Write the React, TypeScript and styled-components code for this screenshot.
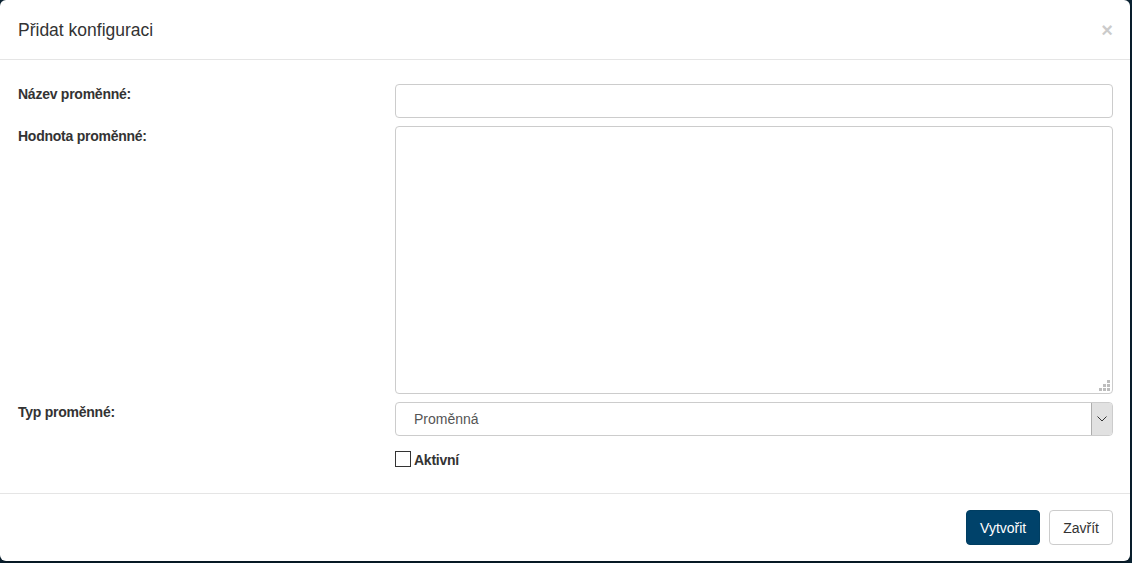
import styled, { createGlobalStyle } from 'styled-components';

const GlobalStyle = createGlobalStyle`
  html, body {
    margin: 0;
    padding: 0;
    height: 100%;
    background: #0b2536;
    font-family: "Liberation Sans", Arial, sans-serif;
    color: #333;
  }
  * { box-sizing: border-box; }
`;

const Modal = styled.div`
  width: 1130px;
  height: 561px;
  background: #fff;
  border-radius: 6px;
  box-shadow: 0 2px 6px rgba(0, 0, 0, 0.5);
  display: flex;
  flex-direction: column;
`;

const Header = styled.div`
  height: 60px;
  padding: 0 18px;
  display: flex;
  align-items: center;
  justify-content: space-between;
  border-bottom: 1px solid #e5e5e5;
`;

const Title = styled.h4`
  margin: 0;
  padding-top: 2px;
  font-size: 17.5px;
  font-weight: normal;
  color: #333;
`;

const Close = styled.button`
  border: 0;
  background: none;
  padding: 0;
  margin-right: -1px;
  font-family: "Liberation Sans", Arial, sans-serif;
  font-size: 20px;
  font-weight: bold;
  color: #000;
  opacity: 0.2;
  line-height: 1;
  cursor: pointer;
`;

const Body = styled.div`
  flex: 1;
  padding: 24px 17px 0 18px;
  display: flex;
  flex-direction: column;
  gap: 8px;
`;

const Row = styled.div`
  display: grid;
  grid-template-columns: 377px 1fr;
  align-items: start;
`;

const Label = styled.label`
  font-size: 14px;
  font-weight: bold;
  padding-top: 2px;
  letter-spacing: -0.25px;
`;

const Input = styled.input`
  height: 34px;
  border: 1px solid #ccc;
  border-radius: 4px;
  padding: 6px 12px;
  font-size: 14px;
  font-family: inherit;
  outline: none;
`;

const AreaWrap = styled.div`
  position: relative;
  height: 268px;
`;

const TextArea = styled.textarea`
  display: block;
  width: 100%;
  height: 100%;
  border: 1px solid #ccc;
  border-radius: 4px;
  padding: 6px 12px;
  font-size: 14px;
  font-family: inherit;
  resize: none;
  outline: none;
`;

const Grip = styled.svg`
  position: absolute;
  right: 3px;
  bottom: 3px;
  pointer-events: none;
`;

const SelectWrap = styled.div`
  position: relative;
  height: 34px;
`;

const Select = styled.select`
  width: 100%;
  height: 34px;
  appearance: none;
  border: 1px solid #ccc;
  border-radius: 4px;
  padding: 0 30px 0 18px;
  font-size: 14px;
  font-family: inherit;
  color: #555;
  background: #fff;
  outline: none;
`;

const SelectArrow = styled.span`
  position: absolute;
  top: 1px;
  right: 1px;
  bottom: 1px;
  width: 21px;
  background: #e1e1e1;
  border-left: 1px solid #adadad;
  border-radius: 0 3px 3px 0;
  display: flex;
  align-items: center;
  justify-content: center;
  pointer-events: none;
`;

const CheckRow = styled.div`
  display: flex;
  align-items: center;
  gap: 3px;
  padding-top: 5px;
`;

const Check = styled.input`
  appearance: none;
  width: 16px;
  height: 16px;
  margin: 0;
  border: 1px solid #333;
  background: #fff;
`;

const CheckLabel = styled.label`
  font-size: 14px;
  font-weight: bold;
  padding-top: 3px;
  letter-spacing: -0.25px;
`;

const Footer = styled.div`
  padding: 16px 17px 16px 18px;
  border-top: 1px solid #e5e5e5;
  display: flex;
  justify-content: flex-end;
  gap: 9px;
`;

const Button = styled.button<{ $primary?: boolean }>`
  height: 35px;
  padding: 0 13px;
  border-radius: 4px;
  font-size: 14px;
  font-family: inherit;
  cursor: pointer;
  border: 1px solid ${(p) => (p.$primary ? '#003e62' : '#ccc')};
  background: ${(p) => (p.$primary ? '#00426a' : '#fff')};
  color: ${(p) => (p.$primary ? '#fff' : '#333')};
`;

const gripDots = [
  [8, 0],
  [4, 4],
  [8, 4],
  [0, 8],
  [4, 8],
  [8, 8],
];

export default function App() {
  return (
    <>
      <GlobalStyle />
      <Modal>
        <Header>
          <Title>Přidat konfiguraci</Title>
          <Close aria-label="Zavřít">×</Close>
        </Header>
        <Body>
          <Row>
            <Label htmlFor="name">Název proměnné:</Label>
            <Input id="name" type="text" />
          </Row>
          <Row>
            <Label htmlFor="value">Hodnota proměnné:</Label>
            <AreaWrap>
              <TextArea id="value" />
              <Grip width="11" height="11" viewBox="0 0 11 11">
                {gripDots.map(([x, y]) => (
                  <rect key={`${x}-${y}`} x={x} y={y} width="3" height="3" fill="#bdbdbd" />
                ))}
              </Grip>
            </AreaWrap>
          </Row>
          <Row>
            <Label htmlFor="type">Typ proměnné:</Label>
            <SelectWrap>
              <Select id="type" defaultValue="var">
                <option value="var">Proměnná</option>
              </Select>
              <SelectArrow>
                <svg width="10" height="6" viewBox="0 0 10 6">
                  <path d="M0.5 0.5 L5 5 L9.5 0.5" fill="none" stroke="#333" strokeWidth="1" />
                </svg>
              </SelectArrow>
            </SelectWrap>
          </Row>
          <Row>
            <span />
            <CheckRow>
              <Check type="checkbox" id="active" />
              <CheckLabel htmlFor="active">Aktivní</CheckLabel>
            </CheckRow>
          </Row>
        </Body>
        <Footer>
          <Button $primary>Vytvořit</Button>
          <Button>Zavřít</Button>
        </Footer>
      </Modal>
    </>
  );
}
